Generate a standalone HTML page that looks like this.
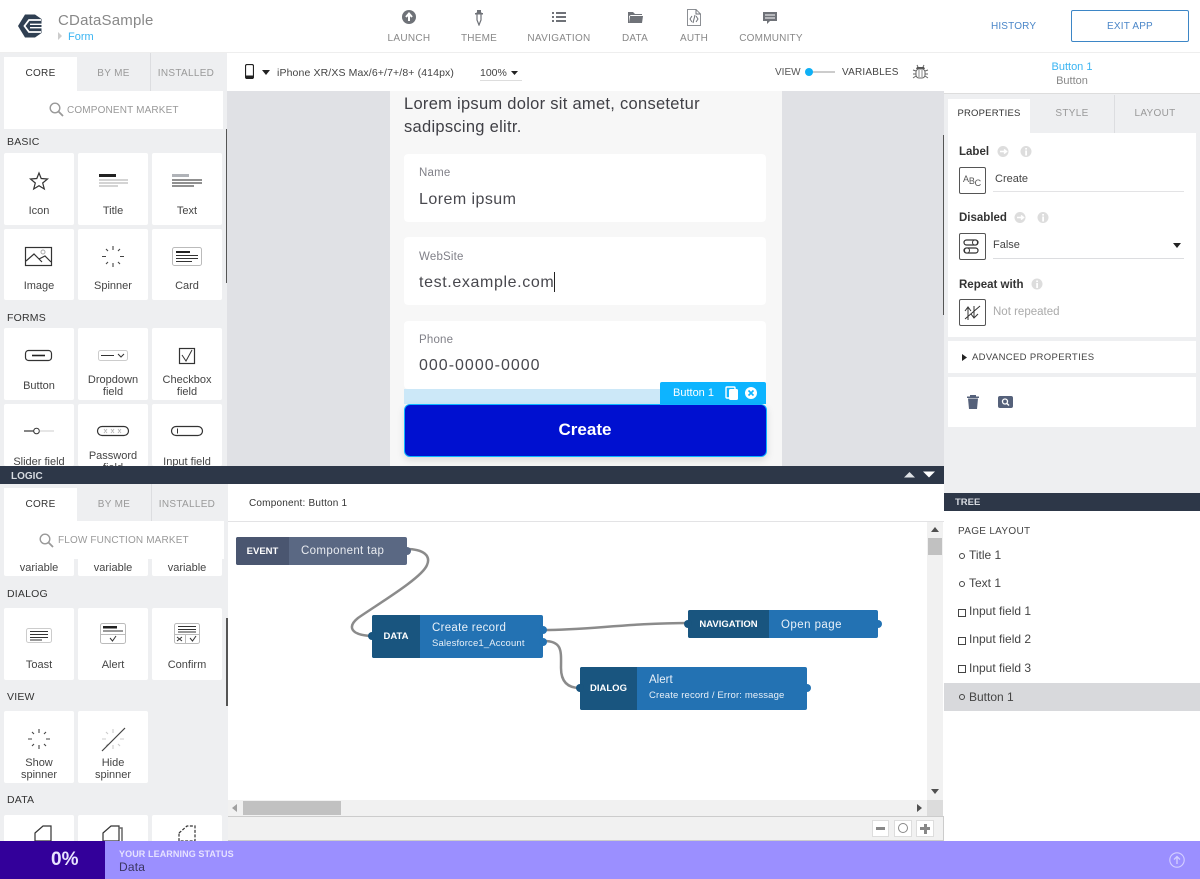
<!DOCTYPE html>
<html><head><meta charset="utf-8"><style>
*{box-sizing:border-box}
html,body{margin:0;padding:0;width:1200px;height:879px;overflow:hidden;background:#fff;font-family:"Liberation Sans",sans-serif;color:#333}
div,svg{position:absolute}
.t{position:absolute;white-space:nowrap;line-height:12px;font-size:11px}
.c{text-align:center}
.tile{position:absolute;width:70px;background:#fff;border-radius:2px}
.lb{position:absolute;left:0;width:70px;text-align:center;font-size:11px;line-height:12px;color:#444}
.tile svg{left:0;top:0}
.sec{position:absolute;left:7px;font-size:10.5px;line-height:12px;color:#333;letter-spacing:.2px}
.tab{position:absolute;font-size:10px;line-height:12px;text-align:center;letter-spacing:.3px}
.ic{fill:none;stroke:#333;stroke-width:1.2}
.tree{position:absolute;left:969px;font-size:12px;line-height:14px;color:#444}
</style></head><body>

<!-- HEADER -->
<div style="left:0;top:0;width:1200px;height:53px;background:#fff;border-bottom:1px solid #eee"></div>
<svg style="left:17px;top:13px" width="26" height="26" viewBox="0 0 26 26"><path d="M8 1.500H18L24.500 6V20L18 24.500H8L1 13Z" fill="#2f3f52"/><path d="M24 7H12L7.500 13L12 19H24" fill="none" stroke="#fff" stroke-width="1.800"/><path d="M13 11.300H25M13 14.700H25" stroke="#fff" stroke-width="1.300"/></svg>
<div class="t" style="left:58px;top:13px;font-size:15px;line-height:16px;color:#888;letter-spacing:.2px">CDataSample</div>
<svg style="left:58px;top:32px" width="5" height="8"><path d="M0 0L4 4L0 8Z" fill="#ccc"/></svg>
<div class="t" style="left:68px;top:31px;color:#3ab4f2">Form</div>

<svg style="left:402px;top:10px" width="14" height="14" viewBox="0 0 14 14"><circle cx="7" cy="7" r="7" fill="#6f7278"/><path d="M7 11V4M4 7L7 3.500L10 7" stroke="#fff" stroke-width="2" fill="none"/></svg>
<div class="t c" style="left:379px;width:60px;top:33px;font-size:10px;color:#888;letter-spacing:.3px">LAUNCH</div>
<svg style="left:474px;top:8px" width="10" height="18" viewBox="0 0 10 18"><path d="M3 5H7V12L5 17L3 12Z" fill="none" stroke="#6f7278" stroke-width="1.200"/><rect x="3" y="2" width="4" height="4" fill="#6f7278"/><rect x="1" y="5" width="8" height="1.500" fill="#6f7278"/></svg>
<div class="t c" style="left:450px;width:58px;top:33px;font-size:10px;color:#888;letter-spacing:.2px">THEME</div>
<svg style="left:552px;top:11px" width="14" height="12"><path d="M0 1H2V3H0ZM4 1H14V3H4ZM0 5H2V7H0ZM4 5H14V7H4ZM0 9H2V11H0ZM4 9H14V11H4Z" fill="#6f7278"/></svg>
<div class="t c" style="left:520px;width:78px;top:33px;font-size:10px;color:#888;letter-spacing:.3px">NAVIGATION</div>
<svg style="left:628px;top:11px" width="15" height="13"><path d="M0 1H5L7 3H14V4H3L1 5V12H0ZM2 5H15L14 12H1Z" fill="#6f7278"/></svg>
<div class="t c" style="left:610px;width:50px;top:33px;font-size:10px;color:#888;letter-spacing:.2px">DATA</div>
<svg style="left:687px;top:9px" width="14" height="17" viewBox="0 0 14 17"><path d="M.5.5H9L13.500 5V16.500H.5Z" fill="none" stroke="#8c8f94"/><path d="M9 .5V5H13.500M5 7L3 10L5 13M9 7L11 10L9 13M8 6L6 14" fill="none" stroke="#6f7278"/></svg>
<div class="t c" style="left:670px;width:48px;top:33px;font-size:10px;color:#888;letter-spacing:.2px">AUTH</div>
<svg style="left:763px;top:12px" width="14" height="13"><path d="M0 0H14V9H7L4 12V9H0Z" fill="#6f7278"/><path d="M2 3H12M2 6H12" stroke="#fff"/></svg>
<div class="t c" style="left:730px;width:82px;top:33px;font-size:10px;color:#888;letter-spacing:.2px">COMMUNITY</div>

<div class="t" style="left:991px;top:21px;font-size:10px;color:#4a86c8;letter-spacing:.15px">HISTORY</div>
<div style="left:1071px;top:10px;width:118px;height:32px;border:1.500px solid #3d86c6;border-radius:2px"></div>
<div class="t c" style="left:1071px;width:118px;top:21px;font-size:10px;color:#4a86c8;letter-spacing:.2px">EXIT APP</div>

<!-- CANVAS TOOLBAR -->
<div style="left:227px;top:53px;width:717px;height:38px;background:#fff"></div>
<svg style="left:245px;top:64px" width="9" height="15"><rect x=".5" y=".5" width="8" height="14" rx="1.500" fill="#fff" stroke="#222" stroke-width="1.200"/><rect x="1" y="11.500" width="7" height="3" fill="#222"/></svg>
<svg style="left:262px;top:70px" width="8" height="5"><path d="M0 0H8L4 5Z" fill="#222"/></svg>
<div class="t" style="left:277px;top:67px;font-size:10.500px;color:#444;letter-spacing:.12px">iPhone XR/XS Max/6+/7+/8+ (414px)</div>
<div class="t" style="left:480px;top:67px;font-size:10.500px;color:#444">100%</div>
<svg style="left:511px;top:71px" width="8" height="5"><path d="M0 0H7L3.500 4Z" fill="#222"/></svg>
<div style="left:480px;top:80px;width:42px;height:1px;background:#ddd"></div>
<div class="t" style="left:775px;top:67px;font-size:10px;color:#555">VIEW</div>
<div style="left:806px;top:71px;width:29px;height:2px;background:#ccc"></div>
<div style="left:805px;top:68px;width:8px;height:8px;border-radius:50%;background:#0fb0f5"></div>
<div class="t" style="left:842px;top:67px;font-size:10px;color:#444;letter-spacing:.2px">VARIABLES</div>
<svg style="left:912px;top:64px" width="17" height="15" viewBox="0 0 17 15"><path d="M5 1L6 3M12 1L11 3M1 6L4 7M16 6L13 7M1 10H4M16 10H13M1 14L4 12M16 14L13 12" stroke="#666"/><path d="M5 3H12L13 5H4Z" fill="#555"/><rect x="4" y="5" width="9" height="9" rx="3" fill="#fff" stroke="#666"/><path d="M7 6V13M10 6V13" stroke="#888"/></svg>

<!-- CANVAS -->
<div style="left:227px;top:91px;width:717px;height:375px;background:#e0e1e5"></div>
<div style="left:390px;top:91px;width:392px;height:375px;background:#f7f7f7"></div>
<div class="t" style="left:404px;top:93px;font-size:16.500px;line-height:23px;color:#404046;white-space:normal;width:350px;letter-spacing:.28px">Lorem ipsum dolor sit amet, consetetur sadipscing elitr.</div>

<div style="left:404px;top:154px;width:362px;height:68px;background:#fff;border-radius:4px"></div>
<div class="t" style="left:419px;top:167px;font-size:11.500px;color:#808088;letter-spacing:.2px">Name</div>
<div class="t" style="left:419px;top:191px;font-size:16px;line-height:18px;color:#48484e;letter-spacing:.45px">Lorem ipsum</div>
<div style="left:404px;top:237px;width:362px;height:68px;background:#fff;border-radius:4px"></div>
<div class="t" style="left:419px;top:251px;font-size:11.500px;color:#808088;letter-spacing:.2px">WebSite</div>
<div class="t" style="left:419px;top:274px;font-size:16px;line-height:18px;color:#48484e;letter-spacing:.62px">test.example.com</div>
<div style="left:554px;top:272px;width:1px;height:20px;background:#222"></div>
<div style="left:404px;top:321px;width:362px;height:68px;background:#fff;border-radius:4px"></div>
<div class="t" style="left:419px;top:334px;font-size:11.500px;color:#808088;letter-spacing:.2px">Phone</div>
<div class="t" style="left:419px;top:357px;font-size:16px;line-height:18px;color:#48484e;letter-spacing:1px">000-0000-0000</div>

<div style="left:404px;top:389px;width:362px;height:15px;background:#cce8f8"></div>
<div style="left:660px;top:382px;width:106px;height:22px;background:#0db4ff;border-radius:2px 2px 0 0"></div>
<div class="t" style="left:673px;top:387px;font-size:11px;color:#fff">Button 1</div>
<svg style="left:725px;top:386px" width="16" height="15"><rect x="1" y="1" width="9" height="11" rx="1" fill="none" stroke="#fff" stroke-width="1.400"/><rect x="4" y="3" width="9" height="11" rx="1.500" fill="#fff"/></svg>
<svg style="left:745px;top:387px" width="12" height="12"><circle cx="6" cy="6" r="6" fill="#fff"/><path d="M3.500 3.500L8.500 8.500M8.500 3.500L3.500 8.500" stroke="#0db4ff" stroke-width="1.600"/></svg>
<div style="left:404px;top:404px;width:363px;height:53px;background:#0010d0;border:1px solid #0db4ff;border-radius:6px;box-shadow:0 3px 8px rgba(0,0,0,.12)"></div>
<div class="t c" style="left:404px;width:362px;top:421px;font-size:17px;line-height:18px;color:#fff;font-weight:bold">Create</div>

<!-- LEFT PANEL TOP -->
<div style="left:0;top:53px;width:227px;height:413px;background:#eeeff1;overflow:hidden">
 <div style="left:4px;top:4px;width:73px;height:34px;background:#fff"></div>
 <div style="left:150px;top:0;width:1px;height:38px;background:#dcdde0"></div>
 <div class="tab" style="left:4px;width:73px;top:15px;color:#333">CORE</div>
 <div class="tab" style="left:77px;width:73px;top:15px;color:#999">BY ME</div>
 <div class="tab" style="left:151px;width:70px;top:15px;color:#999">INSTALLED</div>
 <div style="left:4px;top:38px;width:219px;height:38px;background:#fff"></div>
 <svg style="left:49px;top:49px" width="15" height="15"><circle cx="6" cy="6" r="4.800" fill="none" stroke="#999" stroke-width="1.400"/><path d="M9.500 9.500L14 14" stroke="#999" stroke-width="1.800"/></svg>
 <div class="t" style="left:67px;top:52px;font-size:10px;color:#999;letter-spacing:.15px">COMPONENT MARKET</div>
 <div class="sec" style="top:83px">BASIC</div>

 <div class="tile" style="left:4px;top:100px;height:72px"><svg width="70" height="50"><path d="M35 20L37.200 25.500L43.500 26L38.700 30L40.300 36L35 32.700L29.700 36L31.300 30L26.500 26L32.800 25.500Z" class="ic"/></svg><div class="lb" style="top:52px">Icon</div></div>
 <div class="tile" style="left:78px;top:100px;height:72px"><svg width="70" height="50"><rect x="21" y="21" width="17" height="3" fill="#222"/><path d="M21 27H50M21 30H50M21 33H40" stroke="#aaa"/></svg><div class="lb" style="top:52px">Title</div></div>
 <div class="tile" style="left:152px;top:100px;height:72px"><svg width="70" height="50"><rect x="20" y="21" width="17" height="3" fill="#b0b3b8"/><path d="M20 27H50M20 30H50M20 33H42" stroke="#222"/></svg><div class="lb" style="top:52px">Text</div></div>

 <div class="tile" style="left:4px;top:176px;height:71px"><svg width="70" height="50"><rect x="21.500" y="18.500" width="26" height="18" class="ic"/><path d="M22 32L30 25L38 33M35 30L41 27L47 33" class="ic"/><circle cx="39" cy="23" r="2" fill="none" stroke="#aaa"/></svg><div class="lb" style="top:51px">Image</div></div>
 <div class="tile" style="left:78px;top:176px;height:71px"><svg width="70" height="50"><path d="M35 17V21M35 34V38M24 27.500H28M42 27.500H46M28 20L30 22M40 33L42 35M42 20L40 22M30 33L28 35" stroke="#444" stroke-width="1.100"/></svg><div class="lb" style="top:51px">Spinner</div></div>
 <div class="tile" style="left:152px;top:176px;height:71px"><svg width="70" height="50"><rect x="20.500" y="18.500" width="29" height="18" rx="2" fill="none" stroke="#bbb"/><rect x="24" y="22" width="14" height="2" fill="#222"/><path d="M24 26.500H46M24 29.500H46M24 32.500H40" stroke="#333"/></svg><div class="lb" style="top:51px">Card</div></div>

 <div class="sec" style="top:259px">FORMS</div>
 <div class="tile" style="left:4px;top:275px;height:72px"><svg width="70" height="50"><rect x="21.500" y="22.500" width="26" height="10" rx="3" class="ic" stroke-width="1.400"/><path d="M28 27.500H41" stroke="#222" stroke-width="1.600"/></svg><div class="lb" style="top:52px">Button</div></div>
 <div class="tile" style="left:78px;top:275px;height:72px"><svg width="70" height="50"><rect x="20.500" y="22.500" width="29" height="10" rx="2" fill="none" stroke="#ccc"/><path d="M23 27.500H36" stroke="#333"/><path d="M40 26L43 29L46 26" fill="none" stroke="#333"/></svg><div class="lb" style="top:46px">Dropdown<br>field</div></div>
 <div class="tile" style="left:152px;top:275px;height:72px"><svg width="70" height="50"><rect x="27.500" y="20.500" width="15" height="15" class="ic"/><path d="M30 27L34 33L40 22" fill="none" stroke="#333"/></svg><div class="lb" style="top:46px">Checkbox<br>field</div></div>

 <div class="tile" style="left:4px;top:351px;height:62px"><svg width="70" height="40"><path d="M20 27H31" stroke="#333" stroke-width="1.200"/><path d="M36 27H50" stroke="#ccc"/><circle cx="32.500" cy="27" r="2.800" fill="#fff" stroke="#333"/></svg><div class="lb" style="top:52px">Slider field</div></div>
 <div class="tile" style="left:78px;top:351px;height:62px;overflow:hidden"><svg width="70" height="40"><rect x="19.500" y="22.500" width="31" height="9" rx="4.500" class="ic"/><path d="M26 25L29 29M29 25L26 29M33 25L36 29M36 25L33 29M40 25L43 29M43 25L40 29" stroke="#bbb"/></svg><div class="lb" style="top:46px">Password<br>field</div></div>
 <div class="tile" style="left:152px;top:351px;height:62px"><svg width="70" height="40"><rect x="19.500" y="22.500" width="31" height="9" rx="4.500" class="ic"/><path d="M25.500 24.500V29.500" stroke="#333"/></svg><div class="lb" style="top:52px">Input field</div></div>
 <div style="left:226px;top:76px;width:1px;height:154px;background:#555"></div>
</div>

<!-- RIGHT PANEL -->
<div style="left:944px;top:53px;width:256px;height:440px;background:#eeeff1">
 <div style="left:0;top:0;width:256px;height:41px;background:#fff;border-bottom:1px solid #ddd"></div>
 <div class="t c" style="left:0;width:256px;top:8px;color:#3ab4f2">Button 1</div>
 <div class="t c" style="left:0;width:256px;top:22px;color:#888">Button</div>
 <div style="left:4px;top:46px;width:82px;height:34px;background:#fff"></div>
 <div class="tab" style="left:4px;width:82px;top:55px;color:#333;font-size:9.500px;letter-spacing:.2px">PROPERTIES</div>
 <div class="tab" style="left:86px;width:84px;top:55px;color:#999">STYLE</div>
 <div style="left:170px;top:42px;width:1px;height:38px;background:#dcdde0"></div>
 <div class="tab" style="left:171px;width:80px;top:55px;color:#999">LAYOUT</div>
 <div style="left:4px;top:80px;width:248px;height:204px;background:#fff"></div>

 <div class="t" style="left:15px;top:93px;font-size:11.500px;font-weight:bold;color:#333">Label</div>
 <svg style="left:53px;top:92px" width="40" height="13"><circle cx="6" cy="6.500" r="5.500" fill="#ddd"/><path d="M3 6.500H9M7 4.500L9.500 6.500L7 8.500" stroke="#fff" stroke-width="1.500" fill="none"/><circle cx="29" cy="6.500" r="5.500" fill="#ddd"/><rect x="28.200" y="5.500" width="1.800" height="5" fill="#fff"/><rect x="28.200" y="3" width="1.800" height="1.600" fill="#fff"/></svg>
 <div style="left:15px;top:114px;width:27px;height:27px;border:1px solid #555;border-radius:2px"></div>
 <div class="t" style="left:19px;top:120px;font-size:9px;color:#555;letter-spacing:-.2px">A<span style="position:relative;top:2px">B</span><span style="position:relative;top:4px">C</span></div>
 <div class="t" style="left:51px;top:120px;font-size:11px;color:#444">Create</div>
 <div style="left:49px;top:138px;width:191px;height:1px;background:#e3e3e5"></div>

 <div class="t" style="left:15px;top:159px;font-size:11.500px;font-weight:bold;color:#333">Disabled</div>
 <svg style="left:70px;top:158px" width="40" height="13"><circle cx="6" cy="6.500" r="5.500" fill="#ddd"/><path d="M3 6.500H9M7 4.500L9.500 6.500L7 8.500" stroke="#fff" stroke-width="1.500" fill="none"/><circle cx="29" cy="6.500" r="5.500" fill="#ddd"/><rect x="28.200" y="5.500" width="1.800" height="5" fill="#fff"/><rect x="28.200" y="3" width="1.800" height="1.600" fill="#fff"/></svg>
 <div style="left:15px;top:180px;width:27px;height:27px;border:1px solid #555;border-radius:2px"></div>
 <svg style="left:19px;top:186px" width="19" height="15"><rect x="1" y="1" width="14" height="5" rx="2.500" class="ic" stroke-width="1"/><rect x="1" y="9" width="14" height="5" rx="2.500" class="ic" stroke-width="1"/><circle cx="12" cy="3.500" r="2.500" fill="#fff" stroke="#333"/><circle cx="4" cy="11.500" r="2.500" fill="#fff" stroke="#333"/></svg>
 <div class="t" style="left:49px;top:186px;font-size:11px;color:#444">False</div>
 <svg style="left:229px;top:190px" width="8" height="5"><path d="M0 0H8L4 5Z" fill="#222"/></svg>
 <div style="left:49px;top:205px;width:191px;height:1px;background:#dcdde0"></div>

 <div class="t" style="left:15px;top:226px;font-size:11.500px;font-weight:bold;color:#333">Repeat with</div>
 <svg style="left:87px;top:225px" width="12" height="12"><circle cx="6" cy="6" r="5.500" fill="#ddd"/><rect x="5.200" y="5" width="1.800" height="5" fill="#fff"/><rect x="5.200" y="2.500" width="1.800" height="1.600" fill="#fff"/></svg>
 <div style="left:15px;top:246px;width:27px;height:27px;border:1px solid #555;border-radius:2px"></div>
 <svg style="left:19px;top:250px" width="19" height="19"><path d="M5 17V5M2 8L5 4L8 8M11 3V14M8 11L11 15L15 11M2 16L17 3" fill="none" stroke="#333"/></svg>
 <div class="t" style="left:49px;top:253px;font-size:11.500px;color:#aaa">Not repeated</div>

 <div style="left:4px;top:288px;width:248px;height:32px;background:#fff"></div>
 <svg style="left:18px;top:301px" width="5" height="7"><path d="M0 0L5 3.500L0 7Z" fill="#222"/></svg>
 <div class="t" style="left:28px;top:299px;font-size:9.500px;color:#444;letter-spacing:.35px">ADVANCED PROPERTIES</div>
 <div style="left:4px;top:324px;width:248px;height:50px;background:#fff"></div>
 <svg style="left:23px;top:341px" width="12" height="15"><path d="M0 2.500H12V4H0ZM1 4.500H11L10 15H2Z" fill="#55617a"/><rect x="3" y="1" width="6" height="1.500" fill="#55617a"/></svg>
 <svg style="left:54px;top:343px" width="16" height="12"><rect width="15" height="12" rx="2" fill="#55617a"/><circle cx="7" cy="5.500" r="2.500" fill="none" stroke="#fff" stroke-width="1.300"/><path d="M9 7.500L11 9.500" stroke="#fff" stroke-width="1.400"/></svg>
</div>
<div style="left:943px;top:135px;width:1px;height:180px;background:#555"></div>

<!-- LOGIC BAR -->
<div style="left:0;top:466px;width:944px;height:18px;background:#2d3748"></div>
<div class="t" style="left:11px;top:471px;font-size:10px;font-weight:bold;color:#d6dae0">LOGIC</div>
<svg style="left:904px;top:471px" width="32" height="7"><path d="M0 6.500L5.500 1L11 6.500Z" fill="#dfe2e6"/><path d="M19 .5H31L25 6.500Z" fill="#fff"/></svg>

<!-- LEFT PANEL BOTTOM -->
<div style="left:0;top:484px;width:228px;height:357px;background:#eeeff1;overflow:hidden">
 <div class="tile" style="left:4px;top:40px;height:52px"><div class="lb" style="top:38px">variable</div></div>
 <div class="tile" style="left:78px;top:40px;height:52px"><div class="lb" style="top:38px">variable</div></div>
 <div class="tile" style="left:152px;top:40px;height:52px"><div class="lb" style="top:38px">variable</div></div>
 <div style="left:4px;top:4px;width:73px;height:34px;background:#fff"></div>
 <div style="left:151px;top:0;width:1px;height:38px;background:#dcdde0"></div>
 <div class="tab" style="left:4px;width:73px;top:15px;color:#333">CORE</div>
 <div class="tab" style="left:77px;width:74px;top:15px;color:#999">BY ME</div>
 <div class="tab" style="left:152px;width:70px;top:15px;color:#999">INSTALLED</div>
 <div style="left:4px;top:37px;width:220px;height:38px;background:#fff"></div>
 <svg style="left:39px;top:49px" width="15" height="15"><circle cx="6" cy="6" r="4.800" fill="none" stroke="#999" stroke-width="1.400"/><path d="M9.500 9.500L14 14" stroke="#999" stroke-width="1.800"/></svg>
 <div class="t" style="left:58px;top:51px;font-size:10px;color:#999;letter-spacing:.15px">FLOW FUNCTION MARKET</div>

 <div class="sec" style="top:104px">DIALOG</div>
 <div class="tile" style="left:4px;top:124px;height:72px"><svg width="70" height="50"><rect x="22.500" y="20.500" width="25" height="14" rx="2" fill="none" stroke="#ccc"/><path d="M26 23.500H44M26 26.500H44M26 29.500H44M26 32H38" stroke="#333"/></svg><div class="lb" style="top:51px">Toast</div></div>
 <div class="tile" style="left:78px;top:124px;height:72px"><svg width="70" height="50"><rect x="22.500" y="15.500" width="25" height="20" rx="2" fill="none" stroke="#bbb"/><rect x="25" y="18" width="14" height="2.500" fill="#222"/><path d="M25 23H45" stroke="#333"/><path d="M22.500 26.500H47.500" stroke="#bbb"/><path d="M32 30L34.500 33L38 28" fill="none" stroke="#333"/></svg><div class="lb" style="top:51px">Alert</div></div>
 <div class="tile" style="left:152px;top:124px;height:72px"><svg width="70" height="50"><rect x="22.500" y="15.500" width="25" height="20" rx="2" fill="none" stroke="#bbb"/><path d="M26 18.500H44M26 21.500H44M26 24H44" stroke="#333"/><path d="M22.500 26.500H47.500M33.500 26.500V35.500" stroke="#bbb"/><path d="M25 29L30 33M30 29L25 33M38 30L40.500 33L44 28" fill="none" stroke="#333"/></svg><div class="lb" style="top:51px">Confirm</div></div>

 <div class="sec" style="top:207px">VIEW</div>
 <div class="tile" style="left:4px;top:227px;height:72px"><svg width="70" height="50"><path d="M35 18V22M35 34V38M24 28H28M42 28H46M28 21L30 23M40 33L42 35M42 21L40 23M30 33L28 35" stroke="#444" stroke-width="1.100"/></svg><div class="lb" style="top:46px">Show<br>spinner</div></div>
 <div class="tile" style="left:78px;top:227px;height:72px"><svg width="70" height="50"><path d="M35 18V22M35 34V38M24 28H28M42 28H46M28 21L30 23M40 33L42 35M30 33L28 35" stroke="#ccc" stroke-width="1.100"/><path d="M24 40L47 17" stroke="#444" stroke-width="1.200"/></svg><div class="lb" style="top:46px">Hide<br>spinner</div></div>

 <div class="sec" style="top:310px">DATA</div>
 <div class="tile" style="left:4px;top:331px;height:40px"><svg width="70" height="26"><path d="M31 18L39 11H47V26H31Z" fill="none" stroke="#333" stroke-width="1.200"/></svg></div>
 <div class="tile" style="left:78px;top:331px;height:40px"><svg width="70" height="26"><path d="M25 18L33 11H41V26H25Z" fill="#fff" stroke="#333" stroke-width="1.200"/><path d="M41 13H44V26" fill="none" stroke="#666" stroke-width="1.500"/></svg></div>
 <div class="tile" style="left:152px;top:331px;height:40px"><svg width="70" height="26"><path d="M27 18L35 11H43V26H27Z" fill="none" stroke="#333" stroke-width="1.200" stroke-dasharray="3 1.500"/></svg></div>
 <div style="left:226px;top:134px;width:2px;height:88px;background:#555"></div>
</div>

<!-- LOGIC MAIN -->
<div style="left:228px;top:484px;width:716px;height:38px;background:#fff;border-bottom:1px solid #e3e3e5"></div>
<div class="t" style="left:249px;top:498px;font-size:10px;color:#333;letter-spacing:.2px">Component: Button 1</div>
<div style="left:228px;top:522px;width:715px;height:278px;background:#fff"></div>

<svg style="left:228px;top:522px" width="700" height="278" fill="none" stroke="#8b8b8b" stroke-width="2.500"><path d="M178 27C196 27 203 34 199 43C194 56 150 82 130 96C120 104 121 113 144 114"/><path d="M316 108C360 108 400 101 462 101"/><path d="M316 119C335 119 333 130 333 146C333 160 340 166 352 166"/></svg>

<!-- Event node -->
<div style="left:236px;top:537px;width:171px;height:28px;background:#5a6883;border-radius:2px"></div>
<div style="left:236px;top:537px;width:53px;height:28px;background:#4a5670;border-radius:2px 0 0 2px"></div>
<div class="t c" style="left:236px;width:53px;top:546px;font-size:9.500px;font-weight:bold;color:#fff">EVENT</div>
<div class="t" style="left:301px;top:545px;font-size:11.500px;line-height:13px;color:#e8ebf0;letter-spacing:.35px">Component tap</div>
<div style="left:403px;top:547px;width:8px;height:8px;border-radius:50%;background:#5a6883"></div>

<!-- Data node -->
<div style="left:372px;top:615px;width:171px;height:43px;background:#2372b3;border-radius:2px"></div>
<div style="left:372px;top:615px;width:48px;height:43px;background:#19557f;border-radius:2px 0 0 2px"></div>
<div style="left:368px;top:632px;width:8px;height:8px;border-radius:50%;background:#19557f"></div>
<div class="t c" style="left:372px;width:48px;top:631px;font-size:9.500px;font-weight:bold;color:#fff">DATA</div>
<div class="t" style="left:432px;top:622px;font-size:11.500px;line-height:13px;color:#e8f0f8;letter-spacing:.3px">Create record</div>
<div class="t" style="left:432px;top:638px;font-size:9.500px;color:#e8f0f8;letter-spacing:.15px">Salesforce1_Account</div>
<div style="left:539px;top:626px;width:8px;height:8px;border-radius:50%;background:#2372b3"></div>
<div style="left:539px;top:638px;width:8px;height:8px;border-radius:50%;background:#2372b3"></div>

<!-- Nav node -->
<div style="left:688px;top:610px;width:190px;height:28px;background:#2372b3;border-radius:2px"></div>
<div style="left:688px;top:610px;width:81px;height:28px;background:#19557f;border-radius:2px 0 0 2px"></div>
<div style="left:684px;top:620px;width:8px;height:8px;border-radius:50%;background:#19557f"></div>
<div class="t c" style="left:688px;width:81px;top:619px;font-size:9.500px;font-weight:bold;color:#fff">NAVIGATION</div>
<div class="t" style="left:781px;top:619px;font-size:11.500px;line-height:13px;color:#e8f0f8;letter-spacing:.45px">Open page</div>
<div style="left:874px;top:620px;width:8px;height:8px;border-radius:50%;background:#2372b3"></div>

<!-- Dialog node -->
<div style="left:580px;top:667px;width:227px;height:43px;background:#2372b3;border-radius:2px"></div>
<div style="left:580px;top:667px;width:57px;height:43px;background:#19557f;border-radius:2px 0 0 2px"></div>
<div style="left:576px;top:684px;width:8px;height:8px;border-radius:50%;background:#19557f"></div>
<div class="t c" style="left:580px;width:57px;top:683px;font-size:9.500px;font-weight:bold;color:#fff">DIALOG</div>
<div class="t" style="left:649px;top:674px;font-size:11.500px;line-height:13px;color:#e8f0f8">Alert</div>
<div class="t" style="left:649px;top:690px;font-size:9.500px;color:#e8f0f8;letter-spacing:.15px">Create record / Error: message</div>
<div style="left:803px;top:684px;width:8px;height:8px;border-radius:50%;background:#2372b3"></div>

<!-- Scrollbars -->
<div style="left:927px;top:522px;width:16px;height:278px;background:#f1f1f1"></div>
<div style="left:928px;top:538px;width:14px;height:17px;background:#c1c1c1"></div>
<svg style="left:931px;top:527px" width="8" height="5"><path d="M0 5H8L4 0Z" fill="#505050"/></svg>
<svg style="left:931px;top:789px" width="8" height="5"><path d="M0 0H8L4 5Z" fill="#505050"/></svg>
<div style="left:228px;top:800px;width:699px;height:16px;background:#f1f1f1"></div>
<div style="left:243px;top:801px;width:98px;height:14px;background:#c1c1c1"></div>
<svg style="left:232px;top:804px" width="5" height="8"><path d="M5 0V8L0 4Z" fill="#a0a0a0"/></svg>
<svg style="left:917px;top:804px" width="5" height="8"><path d="M0 0V8L5 4Z" fill="#505050"/></svg>
<div style="left:927px;top:800px;width:16px;height:16px;background:#dcdcdc"></div>
<div style="left:228px;top:816px;width:716px;height:25px;background:#f1f1f1;border-top:1px solid #ccc;border-bottom:1px solid #ccc;border-right:1px solid #ccc"></div>
<div style="left:872px;top:820px;width:17px;height:17px;background:#fff;border:1px solid #ddd"></div>
<div style="left:876px;top:827px;width:9px;height:3px;background:#888"></div>
<div style="left:894px;top:820px;width:18px;height:17px;background:#fff;border:1px solid #ddd"></div>
<div style="left:898px;top:823px;width:10px;height:10px;border:1.500px solid #888;border-radius:50%"></div>
<div style="left:916px;top:820px;width:18px;height:17px;background:#fff;border:1px solid #ddd"></div>
<div style="left:920px;top:827px;width:10px;height:3px;background:#888"></div>
<div style="left:923.500px;top:823.500px;width:3px;height:10px;background:#888"></div>

<!-- TREE -->
<div style="left:944px;top:493px;width:256px;height:18px;background:#2d3748"></div>
<div class="t" style="left:955px;top:497px;font-size:9.500px;font-weight:bold;color:#d6dae0">TREE</div>
<div style="left:944px;top:511px;width:256px;height:330px;background:#fff"></div>
<div class="t" style="left:958px;top:526px;font-size:10px;color:#444;letter-spacing:.3px">PAGE LAYOUT</div>
<div style="left:959px;top:553px;width:6px;height:6px;border:1px solid #444;border-radius:50%"></div>
<div class="tree" style="top:548px">Title 1</div>
<div style="left:959px;top:581px;width:6px;height:6px;border:1px solid #444;border-radius:50%"></div>
<div class="tree" style="top:576px">Text 1</div>
<div style="left:958px;top:609px;width:8px;height:8px;border:1px solid #444"></div>
<div class="tree" style="top:604px">Input field 1</div>
<div style="left:958px;top:637px;width:8px;height:8px;border:1px solid #444"></div>
<div class="tree" style="top:632px">Input field 2</div>
<div style="left:958px;top:665px;width:8px;height:8px;border:1px solid #444"></div>
<div class="tree" style="top:661px">Input field 3</div>
<div style="left:944px;top:683px;width:256px;height:28px;background:#d8d9dc"></div>
<div style="left:959px;top:694px;width:6px;height:6px;border:1px solid #444;border-radius:50%"></div>
<div class="tree" style="top:690px">Button 1</div>

<!-- BOTTOM BAR -->
<div style="left:0;top:841px;width:1200px;height:38px;background:#9b8fff"></div>
<div style="left:0;top:841px;width:105px;height:38px;background:#33009a"></div>
<div class="t" style="left:51px;top:849px;font-size:19px;line-height:21px;font-weight:bold;color:#e8e4ff">0%</div>
<div class="t" style="left:119px;top:848px;font-size:9px;font-weight:bold;color:#e6e2ff;letter-spacing:.1px">YOUR LEARNING STATUS</div>
<div class="t" style="left:119px;top:860px;font-size:12px;line-height:14px;color:#3a3560;letter-spacing:.2px">Data</div>
<svg style="left:1169px;top:852px" width="16" height="16"><circle cx="8" cy="8" r="7.200" fill="none" stroke="#d4cfff" stroke-width="1.100"/><path d="M8 12V5M5 7.500L8 4.500L11 7.500" fill="none" stroke="#d4cfff" stroke-width="1.300"/></svg>

</body></html>
